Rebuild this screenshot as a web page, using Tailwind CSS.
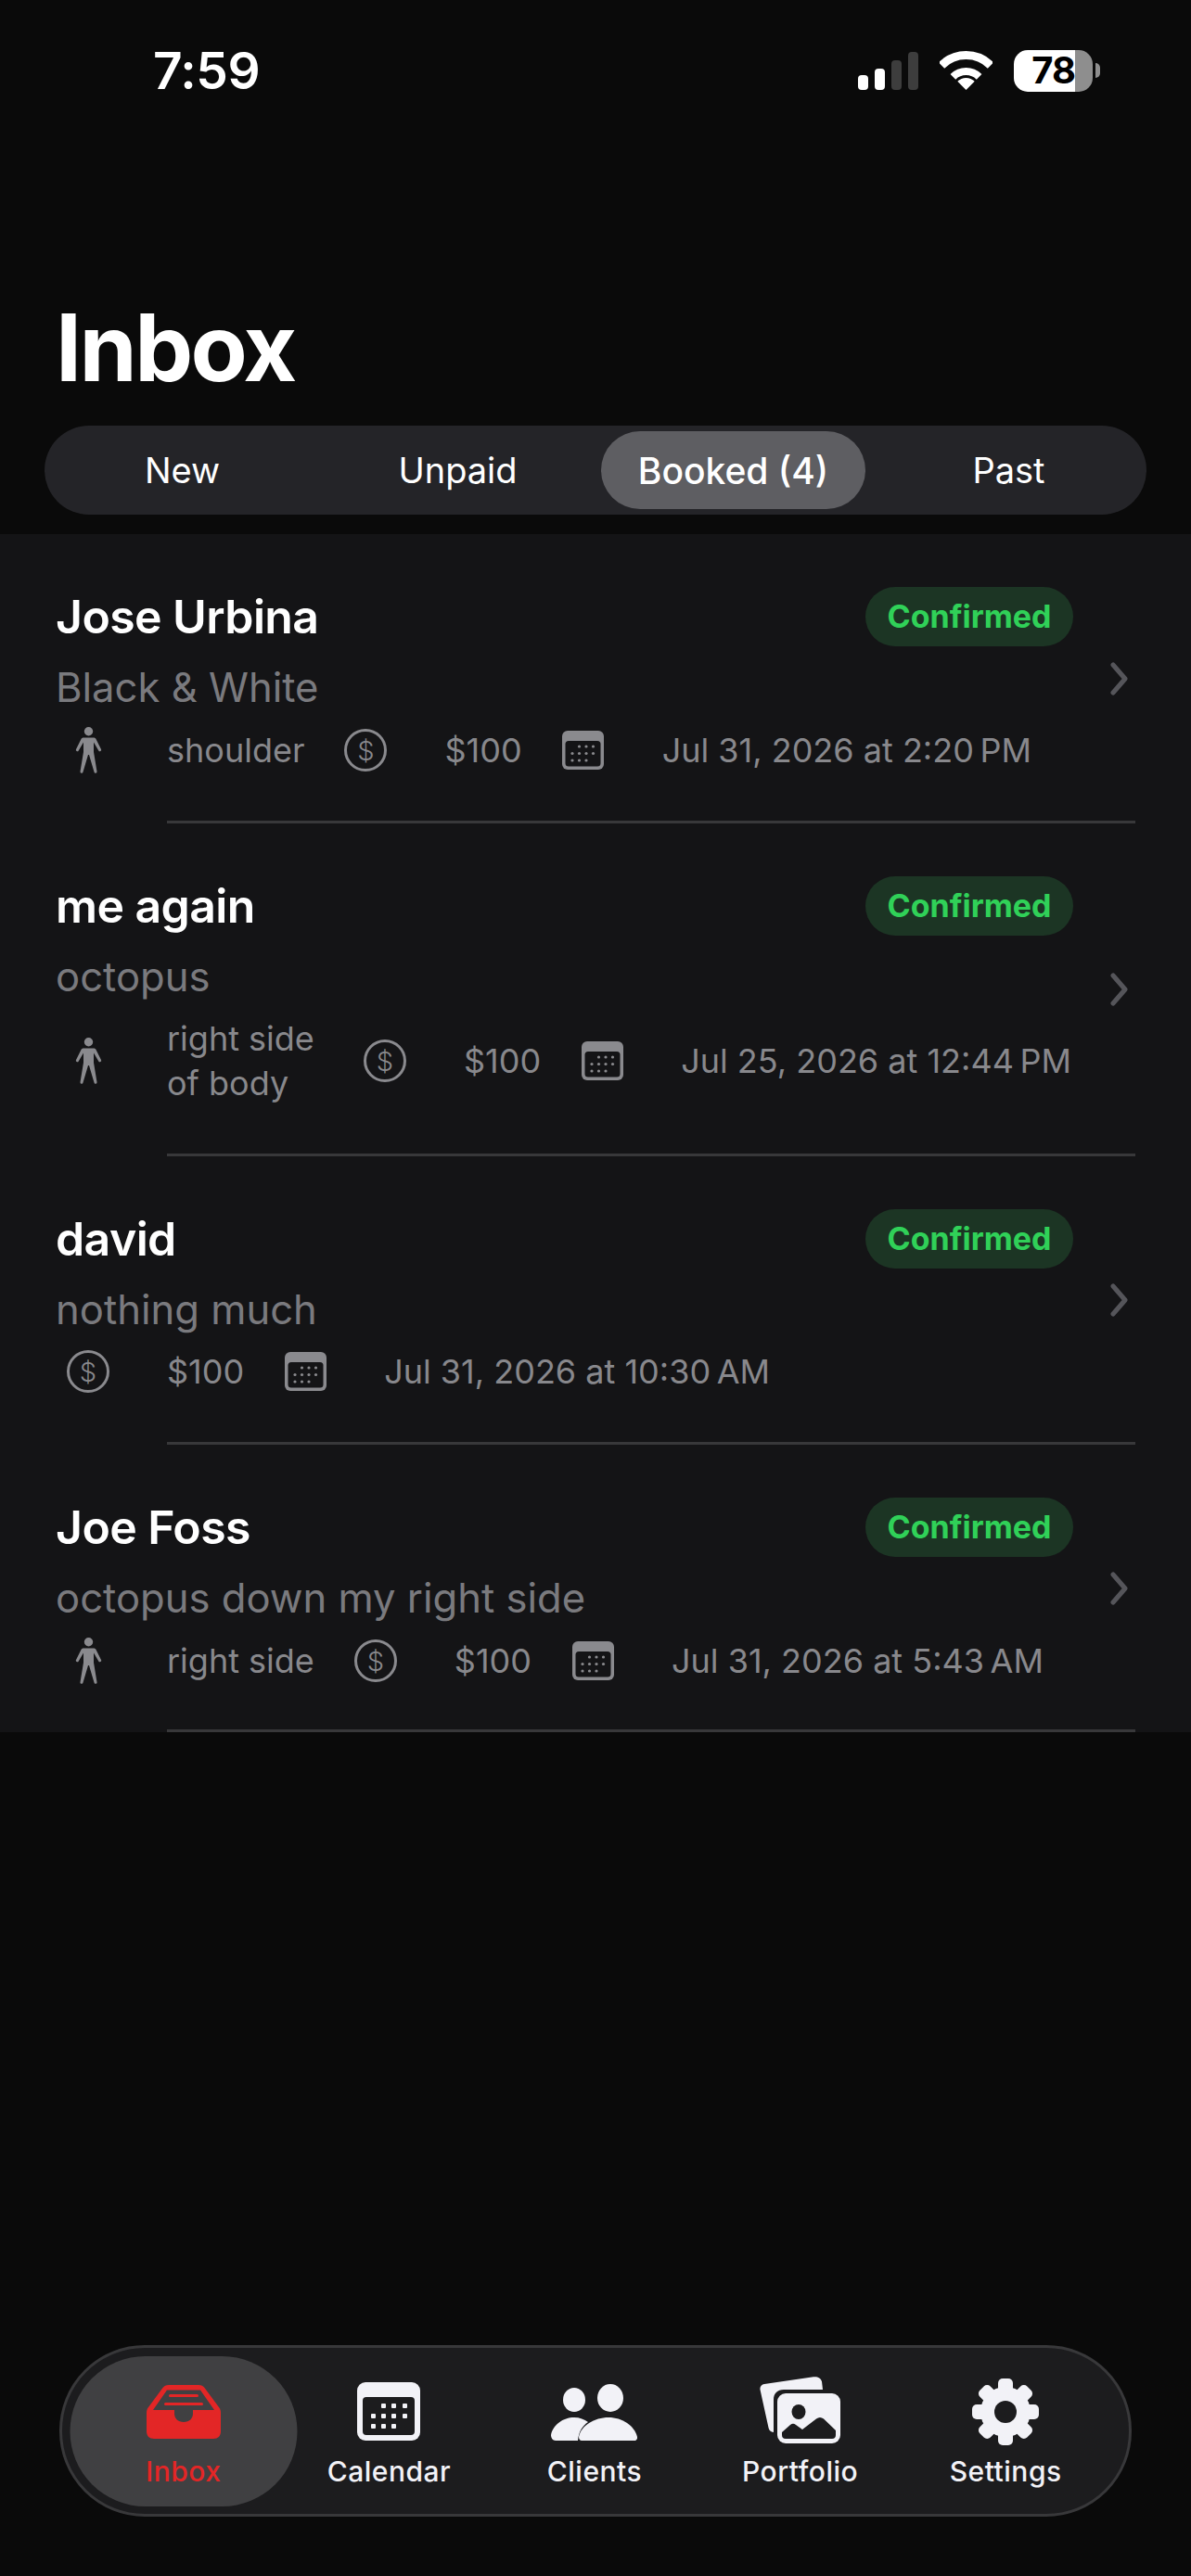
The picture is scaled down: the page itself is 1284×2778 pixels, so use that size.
<!doctype html>
<html>
<head>
<meta charset="utf-8">
<script src="https://cdn.jsdelivr.net/npm/@tailwindcss/browser@4"></script>
</head>
<body class="bg-[#0a0a0a]">
<div class="flex h-[2778px] w-[1284px] flex-col overflow-hidden bg-[#0a0a0a] font-['Inter',sans-serif] text-white">
  <!-- status bar -->
  <div class="flex h-[152px] shrink-0 items-center justify-between pl-[165px] pr-[98px]">
    <span class="text-[55px] font-semibold leading-none tracking-[-0.5px]">7:59</span>
    <div class="flex items-center">
      <svg class="h-[41px] w-[65px]" viewBox="0 0 65 41">
        <rect x="0" y="25" width="11" height="16" rx="4" fill="#fff"/>
        <rect x="18" y="18" width="11" height="23" rx="4" fill="#fff"/>
        <rect x="36" y="9" width="11" height="32" rx="4" fill="#3d3d3d"/>
        <rect x="54" y="0" width="11" height="41" rx="4" fill="#3d3d3d"/>
      </svg>
      <svg class="ml-[23px] h-[42px] w-[57px]" viewBox="0 0 57 42" fill="none">
        <path d="M2 15.500A37.500 37.500 0 0 1 55 15.500" stroke="#fff" stroke-width="9"/>
        <path d="M14.400 27.900A20 20 0 0 1 42.600 27.900" stroke="#fff" stroke-width="8"/>
        <path d="M19.300 32.800A13 13 0 0 1 37.700 32.800L28.500 42Z" fill="#fff"/>
      </svg>
      <div class="ml-[23px] flex h-[45px] w-[85px]">
        <div class="flex h-full w-[66px] items-center justify-end rounded-l-[15px] bg-white text-[40px] font-bold leading-none tracking-[-1px] text-black">78</div>
        <div class="h-full w-[19px] rounded-r-[15px] bg-[#8e8e8e]"></div>
      </div>
      <div class="ml-[3px] h-[16px] w-[5px] rounded-r-full bg-[#8e8e8e]"></div>
    </div>
  </div>

  <h1 class="ml-[60px] mt-[173px] h-[100px] shrink-0 text-[100px] font-bold leading-[100px] tracking-[-2.6px]">Inbox</h1>

  <!-- segment -->
  <div class="mx-[48px] mt-[34px] grid h-[96px] shrink-0 grid-cols-4 rounded-[48px] bg-[#242428] text-[38px] leading-none">
    <div class="flex items-center justify-center">New</div>
    <div class="flex items-center justify-center">Unpaid</div>
    <div class="flex items-center justify-center p-[6px]"><div class="flex h-full w-full items-center justify-center rounded-[42px] bg-[#5e5e62] text-[39px] font-medium">Booked (4)</div></div>
    <div class="flex items-center justify-center">Past</div>
  </div>

  <!-- list -->
  <div class="mt-[21px] shrink-0 bg-[#141416]">

    <div class="flex items-center pl-[60px] pr-[66px]">
      <div class="flex min-w-0 flex-1 flex-col pb-[51px] pr-[39px] pt-[57px]">
        <div class="flex h-[64px] items-center justify-between">
          <span class="text-[50px] font-semibold leading-none tracking-[-0.6px]">Jose Urbina</span>
          <span class="flex h-[64px] w-[224px] items-center justify-center rounded-[32px] bg-[#1c3524] text-[34px] font-bold leading-none text-[#30d158]">Confirmed</span>
        </div>
        <div class="mt-[20px] h-[50px] text-[43.6px] leading-[50px] text-[#7a7a7e]">Black &amp; White</div>
        <div class="mt-[17px] flex min-h-[48px] items-center text-[36px] leading-[48px] text-[#88888c]">
          <div class="flex w-[70px] shrink-0 justify-center"><svg class="h-[50px] w-[29px]" viewBox="0 0 29 50" fill="#8a8a8e"><circle cx="14.500" cy="4.700" r="4.700"/><path d="M9 11.500h11c1 0 2 .5 2.500 1.500L28 24a1.500 1.500 0 0 1-2.700 1.400L20 16.500V27l3.500 21a1.500 1.500 0 0 1-3 .5L15 30h-1L8.500 48.500a1.500 1.500 0 0 1-3-.5L9 27V16.500L3.700 25.400A1.500 1.500 0 0 1 1 24L6.500 13c.5-1 1.500-1.500 2.500-1.500z"/></svg></div>
          <span class="ml-[50px]">shoulder</span>
          <div class="ml-[31px] flex w-[70px] shrink-0 justify-center"><div class="flex h-[46px] w-[46px] items-center justify-center rounded-full border-[3px] border-[#8a8a8e] text-[29px] font-light leading-none">$</div></div>
          <span class="ml-[50px]">$100</span>
          <div class="ml-[31px] flex w-[70px] shrink-0 justify-center"><svg class="h-[42px] w-[45px]" viewBox="0 0 45 42"><rect width="45" height="42" rx="6" fill="#8a8a8e"/><rect x="3.500" y="11" width="38" height="27.500" rx="3.500" fill="#141416"/><g fill="#8a8a8e"><circle cx="18.500" cy="17" r="1.600"/><circle cx="26" cy="17" r="1.600"/><circle cx="33.500" cy="17" r="1.600"/><circle cx="11" cy="24.500" r="1.600"/><circle cx="18.500" cy="24.500" r="1.600"/><circle cx="26" cy="24.500" r="1.600"/><circle cx="33.500" cy="24.500" r="1.600"/><circle cx="11" cy="32" r="1.600"/><circle cx="18.500" cy="32" r="1.600"/><circle cx="26" cy="32" r="1.600"/></g></svg></div>
          <span class="ml-[50px] whitespace-nowrap">Jul 31, 2026 at 2:20&#8239;PM</span>
        </div>
      </div>
      <svg class="mt-[2px] h-[36px] w-[22px] shrink-0" viewBox="0 0 22 36" fill="none"><path d="M4 3l13 15L4 33" stroke="#55555a" stroke-width="5" stroke-linecap="round" stroke-linejoin="round"/></svg>
    </div>
    <div class="ml-[180px] mr-[60px] h-[3px] bg-[#38383a]"></div>

    <div class="flex items-center pl-[60px] pr-[66px]">
      <div class="flex min-w-0 flex-1 flex-col pb-[52px] pr-[39px] pt-[57px]">
        <div class="flex h-[64px] items-center justify-between">
          <span class="text-[50px] font-semibold leading-none tracking-[-0.6px]">me again</span>
          <span class="flex h-[64px] w-[224px] items-center justify-center rounded-[32px] bg-[#1c3524] text-[34px] font-bold leading-none text-[#30d158]">Confirmed</span>
        </div>
        <div class="mt-[20px] h-[50px] text-[43.6px] leading-[50px] text-[#7a7a7e]">octopus</div>
        <div class="mt-[17px] flex min-h-[48px] items-center text-[36px] leading-[48px] text-[#88888c]">
          <div class="flex w-[70px] shrink-0 justify-center"><svg class="h-[50px] w-[29px]" viewBox="0 0 29 50" fill="#8a8a8e"><circle cx="14.500" cy="4.700" r="4.700"/><path d="M9 11.500h11c1 0 2 .5 2.500 1.500L28 24a1.500 1.500 0 0 1-2.700 1.400L20 16.500V27l3.500 21a1.500 1.500 0 0 1-3 .5L15 30h-1L8.500 48.500a1.500 1.500 0 0 1-3-.5L9 27V16.500L3.700 25.400A1.500 1.500 0 0 1 1 24L6.500 13c.5-1 1.500-1.500 2.500-1.500z"/></svg></div>
          <span class="ml-[50px] w-[169px]">right side of body</span>
          <div class="ml-[31px] flex w-[70px] shrink-0 justify-center"><div class="flex h-[46px] w-[46px] items-center justify-center rounded-full border-[3px] border-[#8a8a8e] text-[29px] font-light leading-none">$</div></div>
          <span class="ml-[50px]">$100</span>
          <div class="ml-[31px] flex w-[70px] shrink-0 justify-center"><svg class="h-[42px] w-[45px]" viewBox="0 0 45 42"><rect width="45" height="42" rx="6" fill="#8a8a8e"/><rect x="3.500" y="11" width="38" height="27.500" rx="3.500" fill="#141416"/><g fill="#8a8a8e"><circle cx="18.500" cy="17" r="1.600"/><circle cx="26" cy="17" r="1.600"/><circle cx="33.500" cy="17" r="1.600"/><circle cx="11" cy="24.500" r="1.600"/><circle cx="18.500" cy="24.500" r="1.600"/><circle cx="26" cy="24.500" r="1.600"/><circle cx="33.500" cy="24.500" r="1.600"/><circle cx="11" cy="32" r="1.600"/><circle cx="18.500" cy="32" r="1.600"/><circle cx="26" cy="32" r="1.600"/></g></svg></div>
          <span class="ml-[50px] whitespace-nowrap">Jul 25, 2026 at 12:44&#8239;PM</span>
        </div>
      </div>
      <svg class="mt-[2px] h-[36px] w-[22px] shrink-0" viewBox="0 0 22 36" fill="none"><path d="M4 3l13 15L4 33" stroke="#55555a" stroke-width="5" stroke-linecap="round" stroke-linejoin="round"/></svg>
    </div>
    <div class="ml-[180px] mr-[60px] h-[3px] bg-[#38383a]"></div>

    <div class="flex items-center pl-[60px] pr-[66px]">
      <div class="flex min-w-0 flex-1 flex-col pb-[52px] pr-[39px] pt-[57px]">
        <div class="flex h-[64px] items-center justify-between">
          <span class="text-[50px] font-semibold leading-none tracking-[-0.6px]">david</span>
          <span class="flex h-[64px] w-[224px] items-center justify-center rounded-[32px] bg-[#1c3524] text-[34px] font-bold leading-none text-[#30d158]">Confirmed</span>
        </div>
        <div class="mt-[20px] h-[50px] text-[43.6px] leading-[50px] text-[#7a7a7e]">nothing much</div>
        <div class="mt-[17px] flex min-h-[48px] items-center text-[36px] leading-[48px] text-[#88888c]">
          <div class="flex w-[70px] shrink-0 justify-center"><div class="flex h-[46px] w-[46px] items-center justify-center rounded-full border-[3px] border-[#8a8a8e] text-[29px] font-light leading-none">$</div></div>
          <span class="ml-[50px]">$100</span>
          <div class="ml-[31px] flex w-[70px] shrink-0 justify-center"><svg class="h-[42px] w-[45px]" viewBox="0 0 45 42"><rect width="45" height="42" rx="6" fill="#8a8a8e"/><rect x="3.500" y="11" width="38" height="27.500" rx="3.500" fill="#141416"/><g fill="#8a8a8e"><circle cx="18.500" cy="17" r="1.600"/><circle cx="26" cy="17" r="1.600"/><circle cx="33.500" cy="17" r="1.600"/><circle cx="11" cy="24.500" r="1.600"/><circle cx="18.500" cy="24.500" r="1.600"/><circle cx="26" cy="24.500" r="1.600"/><circle cx="33.500" cy="24.500" r="1.600"/><circle cx="11" cy="32" r="1.600"/><circle cx="18.500" cy="32" r="1.600"/><circle cx="26" cy="32" r="1.600"/></g></svg></div>
          <span class="ml-[50px] whitespace-nowrap">Jul 31, 2026 at 10:30&#8239;AM</span>
        </div>
      </div>
      <svg class="mt-[2px] h-[36px] w-[22px] shrink-0" viewBox="0 0 22 36" fill="none"><path d="M4 3l13 15L4 33" stroke="#55555a" stroke-width="5" stroke-linecap="round" stroke-linejoin="round"/></svg>
    </div>
    <div class="ml-[180px] mr-[60px] h-[3px] bg-[#38383a]"></div>

    <div class="flex items-center pl-[60px] pr-[66px]">
      <div class="flex min-w-0 flex-1 flex-col pb-[49px] pr-[39px] pt-[57px]">
        <div class="flex h-[64px] items-center justify-between">
          <span class="text-[50px] font-semibold leading-none tracking-[-0.6px]">Joe Foss</span>
          <span class="flex h-[64px] w-[224px] items-center justify-center rounded-[32px] bg-[#1c3524] text-[34px] font-bold leading-none text-[#30d158]">Confirmed</span>
        </div>
        <div class="mt-[20px] h-[50px] text-[43.6px] leading-[50px] text-[#7a7a7e]">octopus down my right side</div>
        <div class="mt-[17px] flex min-h-[48px] items-center text-[36px] leading-[48px] text-[#88888c]">
          <div class="flex w-[70px] shrink-0 justify-center"><svg class="h-[50px] w-[29px]" viewBox="0 0 29 50" fill="#8a8a8e"><circle cx="14.500" cy="4.700" r="4.700"/><path d="M9 11.500h11c1 0 2 .5 2.500 1.500L28 24a1.500 1.500 0 0 1-2.700 1.400L20 16.500V27l3.500 21a1.500 1.500 0 0 1-3 .5L15 30h-1L8.500 48.500a1.500 1.500 0 0 1-3-.5L9 27V16.500L3.700 25.400A1.500 1.500 0 0 1 1 24L6.500 13c.5-1 1.500-1.500 2.500-1.500z"/></svg></div>
          <span class="ml-[50px]">right side</span>
          <div class="ml-[31px] flex w-[70px] shrink-0 justify-center"><div class="flex h-[46px] w-[46px] items-center justify-center rounded-full border-[3px] border-[#8a8a8e] text-[29px] font-light leading-none">$</div></div>
          <span class="ml-[50px]">$100</span>
          <div class="ml-[31px] flex w-[70px] shrink-0 justify-center"><svg class="h-[42px] w-[45px]" viewBox="0 0 45 42"><rect width="45" height="42" rx="6" fill="#8a8a8e"/><rect x="3.500" y="11" width="38" height="27.500" rx="3.500" fill="#141416"/><g fill="#8a8a8e"><circle cx="18.500" cy="17" r="1.600"/><circle cx="26" cy="17" r="1.600"/><circle cx="33.500" cy="17" r="1.600"/><circle cx="11" cy="24.500" r="1.600"/><circle cx="18.500" cy="24.500" r="1.600"/><circle cx="26" cy="24.500" r="1.600"/><circle cx="33.500" cy="24.500" r="1.600"/><circle cx="11" cy="32" r="1.600"/><circle cx="18.500" cy="32" r="1.600"/><circle cx="26" cy="32" r="1.600"/></g></svg></div>
          <span class="ml-[50px] whitespace-nowrap">Jul 31, 2026 at 5:43&#8239;AM</span>
        </div>
      </div>
      <svg class="mt-[2px] h-[36px] w-[22px] shrink-0" viewBox="0 0 22 36" fill="none"><path d="M4 3l13 15L4 33" stroke="#55555a" stroke-width="5" stroke-linecap="round" stroke-linejoin="round"/></svg>
    </div>
    <div class="ml-[180px] mr-[60px] h-[3px] bg-[#38383a]"></div>
  </div>

  <!-- tab bar -->
  <div class="mx-[64px] mb-[64px] mt-auto grid h-[185px] shrink-0 grid-cols-5 rounded-[92px] border-[3px] border-[#38383a] bg-[#1c1c1e] pl-[20px] pr-[22px] text-[30px] font-medium leading-none tracking-[0.5px] text-[#f2f2f7]">
    <div class="relative flex flex-col items-center">
      <div class="absolute left-1/2 top-[9px] h-[162px] w-[245px] -translate-x-1/2 rounded-[81px] bg-[#404042]"></div>
      <svg class="relative mt-[40px] h-[58px] w-[80px]" viewBox="0 0 80 58">
        <path d="M24 0h32c3 0 5 1 6.500 3L78 24c1.300 1.800 2 3.500 2 6v20c0 5-3 8-8 8H8c-5 0-8-3-8-8V30c0-2.500.7-4.200 2-6L17.500 3C19 1 21 0 24 0z" fill="#e32626"/>
        <path d="M22 5.500h36L73 27H50v4c0 5-4 9-10 9s-10-4-10-9v-4H7z" fill="#404042"/>
        <rect x="24" y="10" width="32" height="3" rx="1.500" fill="#e32626"/>
        <rect x="19" y="19" width="42" height="3" rx="1.500" fill="#e32626"/>
      </svg>
      <span class="relative mt-[20px] text-[#e32626]">Inbox</span>
    </div>
    <div class="flex flex-col items-center">
      <svg class="mt-[37px] h-[63px] w-[68px]" viewBox="0 0 68 63">
        <rect width="68" height="63" rx="9" fill="#f2f2f7"/>
        <rect x="6" y="16" width="56" height="41" rx="4" fill="#1c1c1e"/>
        <g fill="#f2f2f7"><rect x="26" y="23" width="5" height="5" rx="1"/><rect x="37" y="23" width="5" height="5" rx="1"/><rect x="49" y="23" width="5" height="5" rx="1"/><rect x="15" y="34" width="5" height="5" rx="1"/><rect x="26" y="34" width="5" height="5" rx="1"/><rect x="37" y="34" width="5" height="5" rx="1"/><rect x="49" y="34" width="5" height="5" rx="1"/><rect x="15" y="45" width="5" height="5" rx="1"/><rect x="26" y="45" width="5" height="5" rx="1"/><rect x="37" y="45" width="5" height="5" rx="1"/></g>
      </svg>
      <span class="mt-[18px]">Calendar</span>
    </div>
    <div class="flex flex-col items-center">
      <svg class="mt-[39px] h-[61px] w-[93px]" viewBox="0 0 93 61" fill="#f2f2f7">
        <ellipse cx="25" cy="17" rx="12" ry="13"/>
        <ellipse cx="64" cy="15" rx="14" ry="15"/>
        <path d="M0 55C2 44 13 36 25 36c6 0 11 2 15 5-6 4-10 10-11 20H5c-3 0-5-3-5-6z"/>
        <path d="M33 61c-2 0-3-2-3-4C32 45 47 36 62 36c15 0 28 9 31 21 .4 2-1 4-3 4z"/>
      </svg>
      <span class="mt-[18px]">Clients</span>
    </div>
    <div class="flex flex-col items-center">
      <svg class="mt-[31px] h-[72px] w-[87px]" viewBox="0 0 87 72">
        <path d="M5 8L58 .3c4-.6 8 1 9 5l1 8.700H26c-7 0-11 4-11 11v35c-3-.5-5-2-5.500-5L.5 14C0 11 2 8.500 5 8z" fill="#f2f2f7"/>
        <rect x="19" y="18" width="68" height="54" rx="9" fill="#f2f2f7"/>
        <path d="M24 60L33 52q3-2.500 6 0L46 57 61 45.500q4-3 8 0L82 58v5q0 4-4 4H28q-4 0-4-4z" fill="#1c1c1e"/>
        <ellipse cx="42" cy="38" rx="7.500" ry="8" fill="#1c1c1e"/>
      </svg>
      <span class="mt-[15px]">Portfolio</span>
    </div>
    <div class="flex flex-col items-center">
      <svg class="mt-[33px] h-[72px] w-[72px]" viewBox="0 0 72 72">
        <g fill="#f2f2f7">
          <rect x="28" y="0" width="16" height="72" rx="5"/>
          <rect x="28" y="0" width="16" height="72" rx="5" transform="rotate(45 36 36)"/>
          <rect x="28" y="0" width="16" height="72" rx="5" transform="rotate(90 36 36)"/>
          <rect x="28" y="0" width="16" height="72" rx="5" transform="rotate(135 36 36)"/>
          <circle cx="36" cy="36" r="27"/>
        </g>
        <circle cx="36" cy="36" r="12" fill="#1c1c1e"/>
      </svg>
      <span class="mt-[13px]">Settings</span>
    </div>
  </div>
</div>
</body>
</html>
